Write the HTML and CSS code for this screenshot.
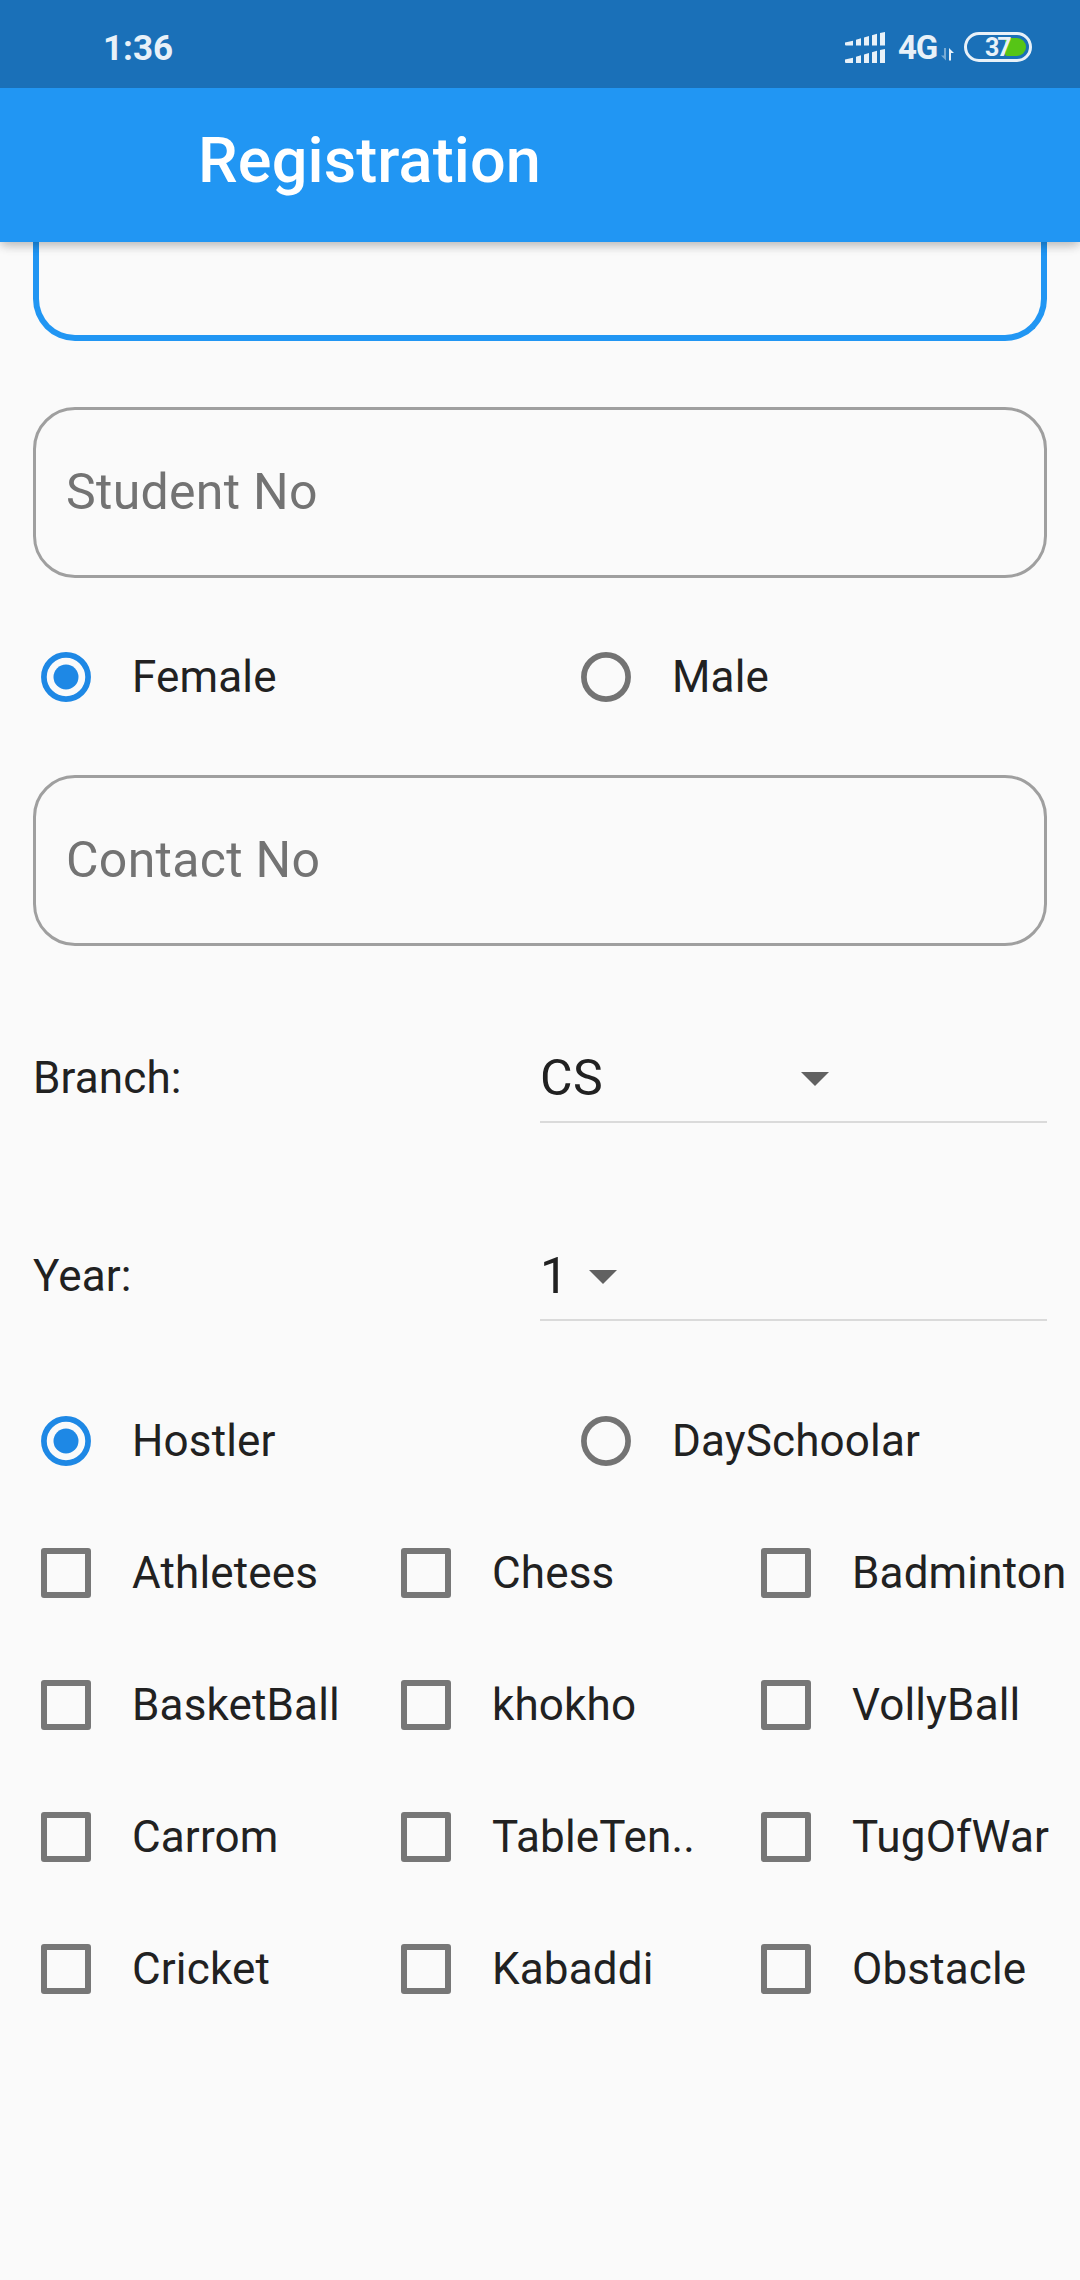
FILE: index.html
```html
<!DOCTYPE html>
<html lang="en">
<head>
<meta charset="utf-8">
<title>Registration</title>
<link rel="stylesheet" href="styles.css">
</head>
<body>
<div class="screen">
  <header class="top">
    <div class="status">
      <span class="clock">1:36</span>
      <div class="indicators">
        <svg class="signal" width="40" height="31" viewBox="0 0 40 31" fill="#e8f1f8">
          <path d="M0 10.6 8 8.8V13.6H1Q0 13.6 0 12.6ZM11 7.8 16 6.3V13.6H11ZM19 5.4 24 4V13.6H19ZM27 3.2 32 1.8V13.6H27ZM35 1 40 0V13.6H35Z"/>
          <path d="M0 27.6 8 25.8V31H1Q0 31 0 30ZM11 24.8 16 23.3V31H11ZM19 22.4 24 21V31H19ZM27 20.2 32 18.8V31H27ZM35 18 40 17V31H35Z"/>
        </svg>
        <span class="network">4G</span>
        <svg class="traffic" width="13" height="13" viewBox="0 0 13 13">
          <path d="M3 0H5V12.5L0 7.5H3Z" fill="#78abd4"/>
          <path d="M8 12.5V0L13 5H10V12.5Z" fill="#e8f1f8"/>
        </svg>
        <div class="battery"><div class="charge"></div><span class="percent">37</span></div>
      </div>
    </div>
    <div class="appbar"><h1>Registration</h1></div>
  </header>
  <main class="form">
    <div class="field focused"></div>
    <div class="field">Student No</div>
    <div class="pair gender">
      <div class="option"><svg class="mark on" viewBox="0 0 50 50"><circle class="ring" cx="25" cy="25" r="22.1"/><circle class="dot" cx="25" cy="25" r="12.5"/></svg>Female</div>
      <div class="option"><svg class="mark" viewBox="0 0 50 50"><circle class="ring" cx="25" cy="25" r="22.1"/></svg>Male</div>
    </div>
    <div class="field contact">Contact No</div>
    <div class="select-row branch">
      <span class="label">Branch:</span>
      <div class="select"><span class="value">CS</span><svg class="arrow" viewBox="0 0 28 14"><path d="M0 0H28L14 14Z"/></svg></div>
    </div>
    <div class="select-row year">
      <span class="label">Year:</span>
      <div class="select"><span class="value">1</span><svg class="arrow" viewBox="0 0 28 14"><path d="M0 0H28L14 14Z"/></svg></div>
    </div>
    <div class="pair residence">
      <div class="option"><svg class="mark on" viewBox="0 0 50 50"><circle class="ring" cx="25" cy="25" r="22.1"/><circle class="dot" cx="25" cy="25" r="12.5"/></svg>Hostler</div>
      <div class="option"><svg class="mark" viewBox="0 0 50 50"><circle class="ring" cx="25" cy="25" r="22.1"/></svg>DaySchoolar</div>
    </div>
    <div class="sports">
      <div class="option"><span class="box"></span>Athletees</div>
      <div class="option"><span class="box"></span>Chess</div>
      <div class="option"><span class="box"></span>Badminton</div>
      <div class="option"><span class="box"></span>BasketBall</div>
      <div class="option"><span class="box"></span>khokho</div>
      <div class="option"><span class="box"></span>VollyBall</div>
      <div class="option"><span class="box"></span>Carrom</div>
      <div class="option"><span class="box"></span>TableTen..</div>
      <div class="option"><span class="box"></span>TugOfWar</div>
      <div class="option"><span class="box"></span>Cricket</div>
      <div class="option"><span class="box"></span>Kabaddi</div>
      <div class="option"><span class="box"></span>Obstacle</div>
    </div>
  </main>
</div>
</body>
</html>
```
FILE: styles.css
```css
* { box-sizing: border-box; }

body {
  margin: 0;
  background: #fafafa;
  color: #212121;
  font: 400 44px/52px Roboto, sans-serif;
  letter-spacing: 0.15px;
}

.screen {
  display: flex;
  flex-direction: column;
  width: 1080px;
  height: 2280px;
  overflow: hidden;
}

/* Status bar and app bar */
.top {
  position: relative;
  z-index: 1;
  flex: none;
  box-shadow: 0 5px 11px -3px rgba(0, 0, 0, 0.16), 0 4px 8px rgba(0, 0, 0, 0.09), 0 2px 14px rgba(0, 0, 0, 0.08);
}

.status {
  display: flex;
  justify-content: space-between;
  height: 88px;
  padding: 0 48px 0 103px;
  background: #1a70b8;
  color: #e8f1f8;
  letter-spacing: 0;
}

.clock {
  padding-top: 29px;
  font-size: 35px;
  font-weight: 700;
  line-height: 40px;
}

.indicators {
  display: flex;
  align-items: flex-start;
}

.signal { margin-top: 32px; }

.network {
  width: 39px;
  margin: 28px 0 0 13px;
  font-size: 33px;
  font-weight: 700;
  line-height: 40px;
  letter-spacing: -1.2px;
}

.traffic { margin: 47.5px 0 0 4px; }

.battery {
  position: relative;
  width: 68px;
  height: 30px;
  margin: 32px 0 0 10px;
  padding: 3px 3px;
  border: 3px solid #e8f1f8;
  border-radius: 15px;
}

.charge {
  width: 21px;
  height: 18px;
  margin-left: auto;
  border-radius: 2px 9px 9px 2px;
  background: #56c516;
}

.percent {
  position: absolute;
  top: 1px;
  left: 18px;
  font-size: 25px;
  font-weight: 700;
  line-height: 24px;
  letter-spacing: -2px;
}

.appbar {
  display: flex;
  align-items: center;
  height: 154px;
  padding: 0 0 9px 198px;
  background: #2196f3;
}

.appbar h1 {
  margin: 0;
  color: #fff;
  font-size: 63px;
  font-weight: 500;
  line-height: 74px;
  letter-spacing: 0.12px;
}

/* Form */
.form {
  display: flex;
  flex-direction: column;
}

.field {
  display: flex;
  align-items: center;
  height: 171px;
  margin: 66px 33px 0;
  padding: 0 30px 2px;
  border: 3px solid #9f9f9f;
  border-radius: 42px;
  color: #737373;
  font-size: 50px;
  letter-spacing: 0.3px;
}

.field.focused {
  height: 99px;
  margin-top: 0;
  border: 6px solid #2196f3;
  border-top: 0;
  border-radius: 0 0 42px 42px;
}

.field.contact { margin-top: 32px; }

.pair {
  display: grid;
  grid-template-columns: 1fr 1fr;
}

.gender { margin-top: 33px; }

.option {
  display: flex;
  align-items: center;
  gap: 41px;
  height: 132px;
  padding-left: 41px;
  white-space: nowrap;
}

.mark {
  flex: none;
  width: 50px;
  height: 50px;
}

.ring {
  fill: none;
  stroke: #737373;
  stroke-width: 5.7;
}

.on .ring { stroke: #1e88e5; }
.dot { fill: #1e88e5; }

.box {
  flex: none;
  width: 50px;
  height: 50px;
  border: 6px solid #777;
  border-radius: 3px;
}

.select-row {
  display: grid;
  grid-template-columns: 1fr 1fr;
  align-items: center;
  height: 89px;
  margin: 88px 33px 0;
}

.year { margin-top: 109px; }

.label { padding-bottom: 2px; }

.select {
  display: flex;
  align-items: center;
  height: 89px;
  border-bottom: 2px solid #dadada;
}

.value {
  padding-top: 1px;
  font-size: 50px;
  line-height: 58px;
  letter-spacing: 0.45px;
}

.branch .value { width: 261px; }
.year .value { width: 49px; }

.arrow {
  width: 28px;
  height: 14px;
  margin-top: 2px;
  fill: #616161;
}

.residence { margin-top: 54px; }

.sports {
  display: grid;
  grid-template-columns: repeat(3, 360px);
}
```
